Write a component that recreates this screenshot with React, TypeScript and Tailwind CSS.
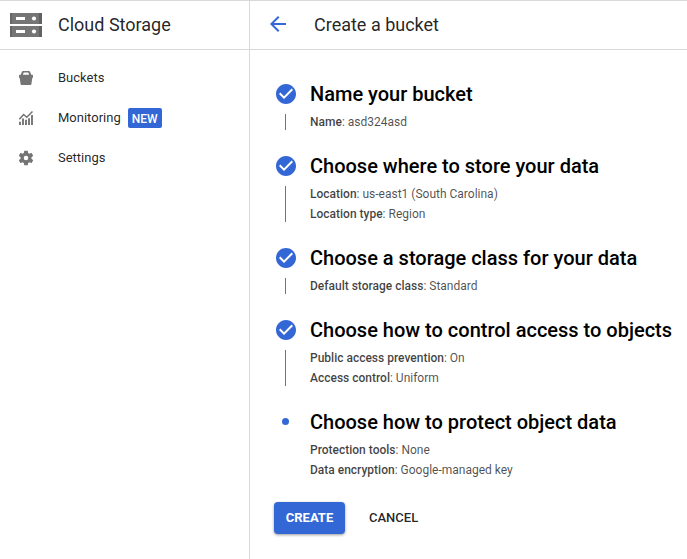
import React from "react";

type Detail = { label: string; value: string };
type Step = { title: string; done: boolean; details: Detail[] };

const steps: Step[] = [
  { title: "Name your bucket", done: true, details: [{ label: "Name", value: "asd324asd" }] },
  {
    title: "Choose where to store your data",
    done: true,
    details: [
      { label: "Location", value: "us-east1 (South Carolina)" },
      { label: "Location type", value: "Region" },
    ],
  },
  {
    title: "Choose a storage class for your data",
    done: true,
    details: [{ label: "Default storage class", value: "Standard" }],
  },
  {
    title: "Choose how to control access to objects",
    done: true,
    details: [
      { label: "Public access prevention", value: "On" },
      { label: "Access control", value: "Uniform" },
    ],
  },
  {
    title: "Choose how to protect object data",
    done: false,
    details: [
      { label: "Protection tools", value: "None" },
      { label: "Data encryption", value: "Google-managed key" },
    ],
  },
];

function StorageLogo() {
  return (
    <svg width="32" height="24" viewBox="0 0 32 24">
      {[0, 13].map((y) => (
        <g key={y}>
          <rect y={y} width="32" height="11" fill="#757575" />
          <rect y={y} width="2" height="11" fill="#666" />
          <rect x="29" y={y} width="3" height="11" fill="#616161" />
          <rect x="6" y={y + 4} width="9" height="3" fill="#fff" />
          <circle cx="24" cy={y + 5.5} r="2.1" fill="#fff" />
        </g>
      ))}
    </svg>
  );
}

function BucketIcon() {
  return (
    <svg width="14" height="14" viewBox="0 0 14 14" fill="#757575">
      <path
        d="M4.2 0h5.6c.6 0 1.1.3 1.3.8l1.1 3h1.1c.4 0 .7.3.7.7v1.8c0 .4-.3.7-.7.7l-.9 6c-.1.6-.6 1-1.2 1H2.8c-.6 0-1.1-.4-1.2-1L.7 7C.3 7 0 6.700 0 6.300V4.500c0-.4.3-.7.7-.7h1.100l1.100-3C3.100.3 3.600 0 4.200 0zm.5 1.600-.8 2.200h6.200l-.8-2.200z"
        fillRule="evenodd"
      />
    </svg>
  );
}

function MonitoringIcon() {
  return (
    <svg width="14" height="14" viewBox="0 0 14 14" fill="none" stroke="#757575">
      <path d="M.4 8.300 4.600 3.500l3.200 2.800L13.500.5" strokeWidth="1.500" />
      <path d="M1 14v-3.200M4 14V7.400M7 14V8.700M10 14V7.300M13 14V4" strokeWidth="1.900" />
    </svg>
  );
}

function SettingsIcon() {
  return (
    <svg width="16" height="16" viewBox="1.5 1.5 21 21" fill="#757575">
      <path d="M19.14 12.94c.04-.3.06-.61.06-.94 0-.32-.02-.64-.07-.94l2.03-1.58c.18-.14.23-.41.12-.61l-1.92-3.32c-.12-.22-.37-.29-.59-.22l-2.39.96c-.5-.38-1.03-.7-1.62-.94L14.4 2.81c-.04-.24-.24-.41-.48-.41h-3.84c-.24 0-.43.17-.47.41l-.36 2.54c-.59.24-1.13.57-1.62.94l-2.39-.96c-.22-.08-.47 0-.59.22L2.74 8.87c-.12.21-.08.47.12.61l2.03 1.58c-.05.3-.09.63-.09.94s.02.64.07.94l-2.03 1.58c-.18.14-.23.41-.12.61l1.92 3.32c.12.22.37.29.59.22l2.39-.96c.5.38 1.03.7 1.62.94l.36 2.54c.05.24.24.41.48.41h3.84c.24 0 .44-.17.47-.41l.36-2.54c.59-.24 1.13-.56 1.62-.94l2.39.96c.22.08.47 0 .59-.22l1.92-3.32c.12-.22.07-.47-.12-.61zM12 15a3 3 0 1 1 0-6 3 3 0 0 1 0 6" />
    </svg>
  );
}

function CheckIcon() {
  return (
    <svg width="20" height="20" viewBox="2 2 20 20" fill="#3367d6">
      <path d="M12 2C6.48 2 2 6.48 2 12s4.48 10 10 10 10-4.48 10-10S17.52 2 12 2m-2 15-5-5 1.41-1.41L10 14.17l7.59-7.59L19 8z" />
    </svg>
  );
}

function NavItem({ icon, label, badge }: { icon: React.ReactNode; label: string; badge?: string }) {
  return (
    <a className="flex h-10 items-center pl-[18px] text-[13px] text-black/87">
      <span className="mr-6 flex w-4 justify-center">{icon}</span>
      {label}
      {badge && (
        <span className="ml-[7px] flex h-5 w-[34px] items-center justify-center rounded-xs bg-[#3367d6] pt-px text-xs font-medium text-white">
          {badge}
        </span>
      )}
    </a>
  );
}

function StepRow({ step }: { step: Step }) {
  return (
    <li className="flex pb-4">
      <div className="flex w-[22px] shrink-0 flex-col items-center">
        <div className="flex h-9 items-center">
          {step.done ? <CheckIcon /> : <span className="mr-0.5 mb-0.5 size-[7px] rounded-full bg-[#3367d6]" />}
        </div>
        {step.done && <div className="my-0.5 mr-px w-px flex-1 bg-[#757575]" />}
      </div>
      <div className="ml-[13px]">
        <h2 className="text-xl leading-9 font-medium whitespace-nowrap text-black">{step.title}</h2>
        {step.details.map((d) => (
          <p key={d.label} className="text-xs leading-5 text-black/70">
            <span className="font-medium text-black/75">{d.label}</span>: {d.value}
          </p>
        ))}
      </div>
    </li>
  );
}

export default function App() {
  return (
    <div className="flex h-[559px] w-[687px] overflow-hidden border-t border-[#d9d9d9] bg-white font-['Roboto',sans-serif]">
      <aside className="flex w-[250px] shrink-0 flex-col border-r border-[#d9d9d9]">
        <header className="flex h-[49px] items-center border-b border-[#d9d9d9] pl-2.5">
          <StorageLogo />
          <h1 className="ml-4 text-lg text-black/87">Cloud Storage</h1>
        </header>
        <nav className="pt-2">
          <NavItem icon={<BucketIcon />} label="Buckets" />
          <NavItem icon={<MonitoringIcon />} label="Monitoring" badge="NEW" />
          <NavItem icon={<SettingsIcon />} label="Settings" />
        </nav>
      </aside>
      <main className="flex-1">
        <header className="flex h-[49px] items-center border-b border-[#d9d9d9] pl-5">
          <svg width="16" height="16" viewBox="4 4 16 16" fill="#3367d6" className="mb-0.5">
            <path d="M20 11H7.83l5.59-5.59L12 4l-8 8 8 8 1.41-1.41L7.83 13H20z" />
          </svg>
          <h1 className="ml-7 text-lg text-black/87">Create a bucket</h1>
        </header>
        <ol className="pt-[26px] pl-[25px]">
          {steps.map((s) => (
            <StepRow key={s.title} step={s} />
          ))}
        </ol>
        <div className="flex pt-1.5 pl-6 text-[13px]">
          <button className="h-8 w-[71px] rounded bg-[#3367d6] font-bold text-white shadow-[0_1px_3px_rgba(0,0,0,0.4)]">
            CREATE
          </button>
          <button className="ml-6 h-8 font-medium text-black/87">CANCEL</button>
        </div>
      </main>
    </div>
  );
}
